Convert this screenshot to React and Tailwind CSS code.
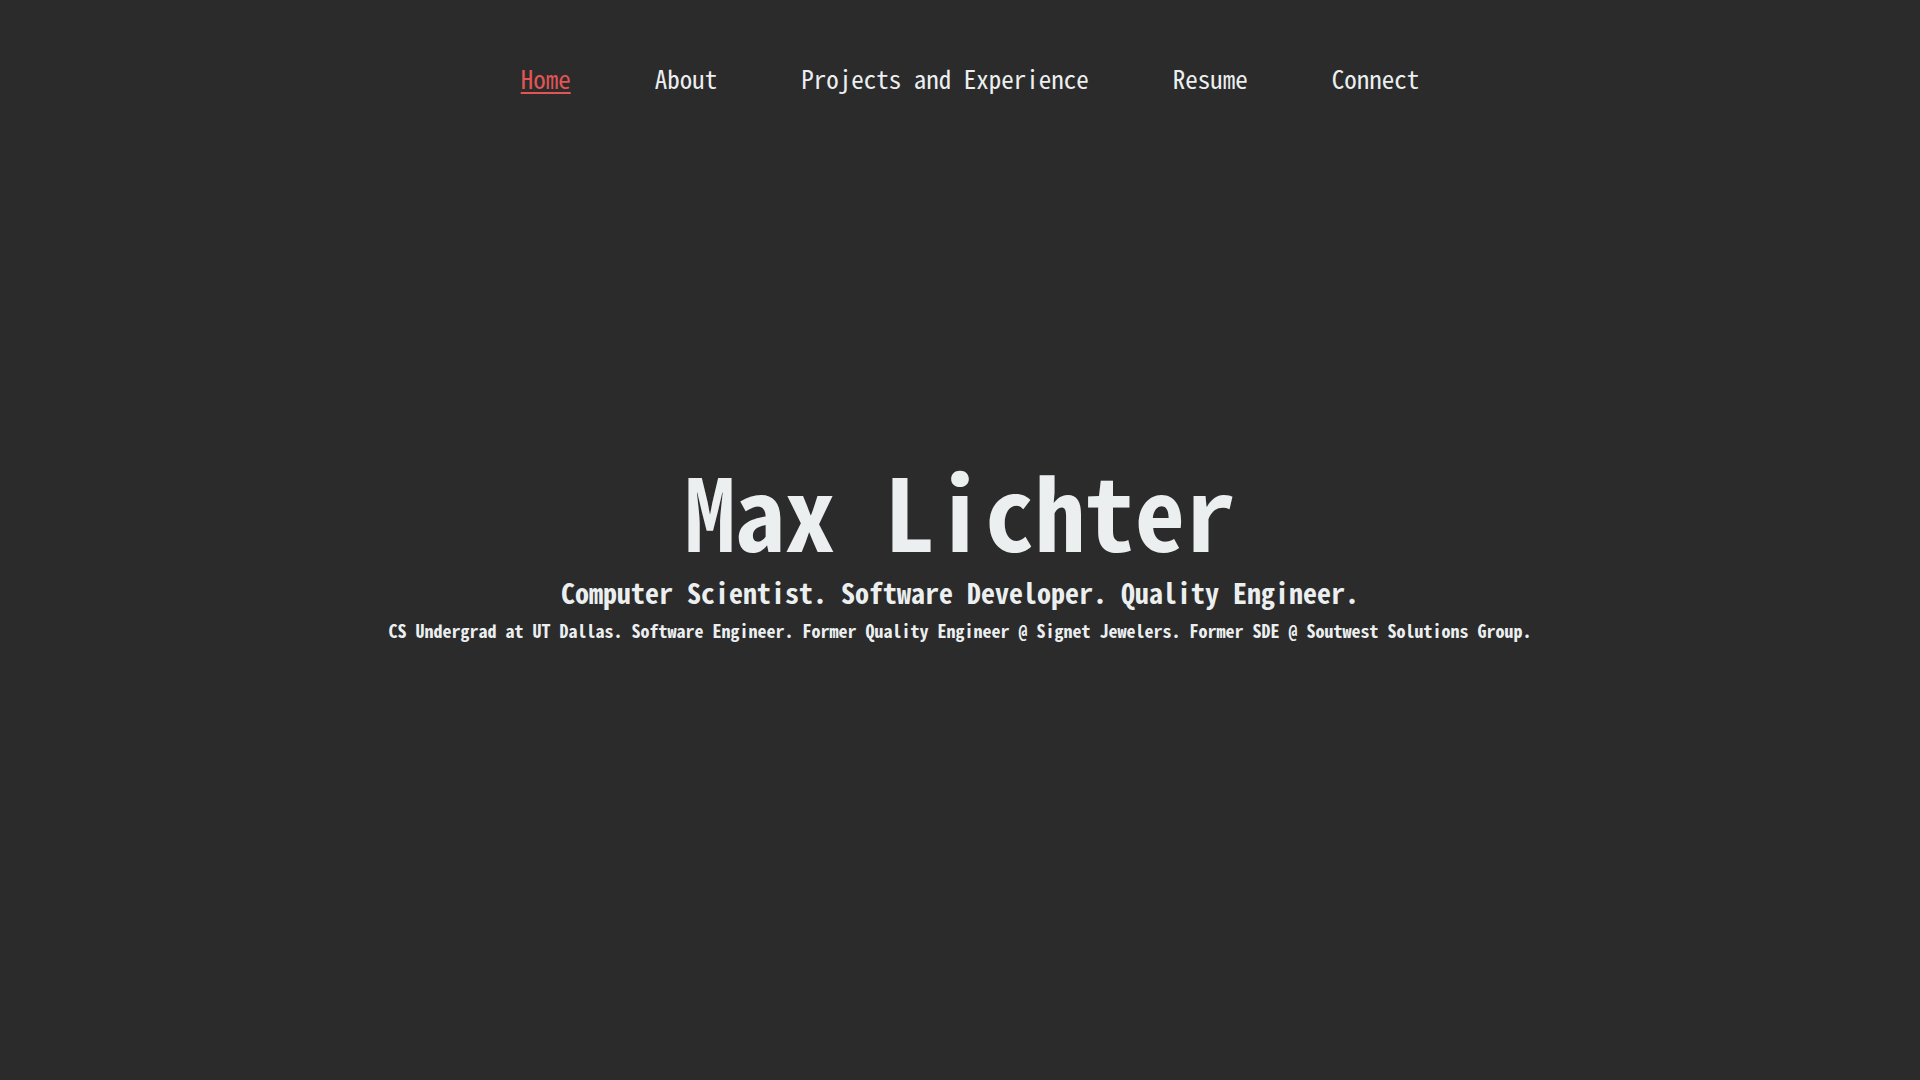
export default function App() {
  const items = ["Home", "About", "Projects and Experience", "Resume", "Connect"];
  return (
    <div
      className="min-h-screen w-full bg-[#2b2b2b] text-[#eceff0]"
      style={{ fontFamily: '"Noto Sans Mono CJK SC", "Noto Sans CJK SC", "DejaVu Sans Mono", monospace' }}
    >
      <nav className="flex justify-center pt-[66px] pl-[20px]">
        <ul className="flex gap-[84px] text-[25px] leading-[25px]">
          {items.map((it, i) => (
            <li key={it}>
              <a
                href="#"
                className={
                  i === 0
                    ? "text-[#e05555] underline underline-offset-[3px] decoration-[2px]"
                    : "text-[#eceff0]"
                }
              >
                {it}
              </a>
            </li>
          ))}
        </ul>
      </nav>
      <main className="flex flex-col items-center mt-[368px] text-center">
        <h1 className="text-[100px] leading-[100px] font-bold">Max Lichter</h1>
        <h2 className="mt-[19px] text-[28px] leading-[28px] font-bold">
          Computer Scientist. Software Developer. Quality Engineer.
        </h2>
        <p className="mt-[15px] text-[18px] leading-[18px] font-bold">
          CS Undergrad at UT Dallas. Software Engineer. Former Quality Engineer @ Signet Jewelers. Former SDE @ Soutwest Solutions Group.
        </p>
      </main>
    </div>
  );
}
